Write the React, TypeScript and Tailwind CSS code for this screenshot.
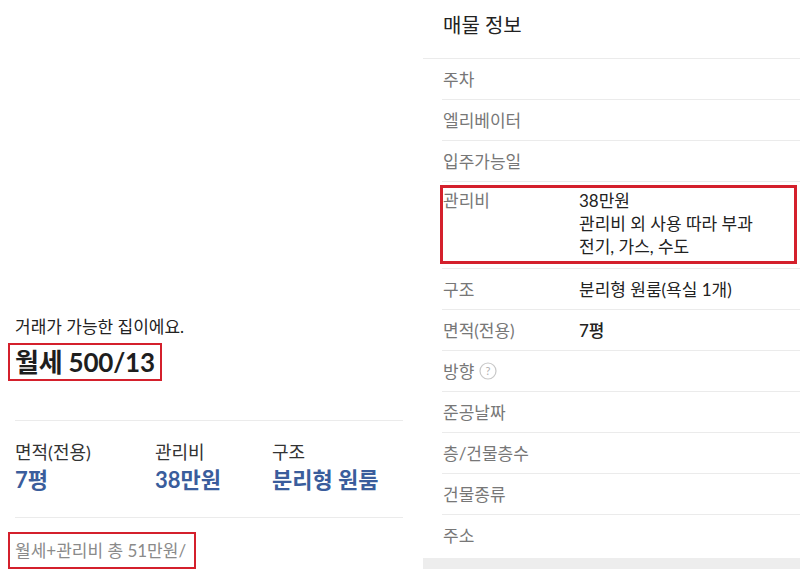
import React from 'react';

const font = "font-['Lato','Noto_Sans_CJK_KR',sans-serif]";

const rows: { label: string; value?: string[]; help?: boolean; strong?: boolean; mark?: boolean }[] = [
  { label: '주차' },
  { label: '엘리베이터' },
  { label: '입주가능일' },
  { label: '관리비', value: ['38만원', '관리비 외 사용 따라 부과', '전기, 가스, 수도'], mark: true },
  { label: '구조', value: ['분리형 원룸(욕실 1개)'] },
  { label: '면적(전용)', value: ['7평'], strong: true },
  { label: '방향', help: true },
  { label: '준공날짜' },
  { label: '층/건물층수' },
  { label: '건물종류' },
  { label: '주소' },
];

const stats = [
  { label: '면적(전용)', value: '7평', w: 'w-[140px]' },
  { label: '관리비', value: '38만원', w: 'w-[117px]' },
  { label: '구조', value: '분리형 원룸', w: 'flex-1' },
];

function HelpIcon() {
  return (
    <svg width="18" height="18" viewBox="0 0 18 18" className="ml-[5px]">
      <circle cx="9" cy="9" r="8" fill="none" stroke="#c8c8c8" strokeWidth="1.2" />
      <text x="9" y="13" textAnchor="middle" fontSize="11" fill="#b0b0b0" fontFamily="Lato, sans-serif">?</text>
    </svg>
  );
}

export default function App() {
  return (
    <div className={`w-[800px] h-[583px] bg-white flex overflow-hidden ${font}`}>
      {/* left: price summary */}
      <div className="w-[405px] pt-[316px] pl-[15px] flex flex-col">
        <p className="text-[17px] leading-[22px] text-[#222]">거래가 가능한 집이에요.</p>
        <div className="mt-[5px] -ml-[7px] self-start border-2 border-[#d4202c] pl-[5px] pr-[5px]">
          <span className="text-[26px] leading-[34px] font-bold text-[#1e1e1e] tracking-[-0.2px]">월세 500/13</span>
        </div>
        <div className="mt-[39px] w-[388px] border-t border-[#ebebeb]" />
        <div className="mt-[19px] flex w-[388px]">
          {stats.map((s) => (
            <div key={s.label} className={s.w}>
              <div className="text-[18px] leading-[25px] text-[#333]">{s.label}</div>
              <div className="mt-[1px] text-[22px] leading-[28px] font-bold text-[#3a5d9c]">{s.value}</div>
            </div>
          ))}
        </div>
        <div className="mt-[23px] w-[388px] border-t border-[#ebebeb]" />
        <div className="mt-[14px] -ml-[7px] self-start border-2 border-[#d4202c] pl-[5px] pr-[8px] whitespace-nowrap">
          <span className="text-[17px] leading-[33px] text-[#8a8a8a]">월세+관리비 총 51만원/</span>
        </div>
      </div>

      {/* right: listing info */}
      <div className="ml-[18px] flex-1 flex flex-col">
        <div className="h-[59px] border-b border-[#ebebeb] pl-[20px] pt-[11px]">
          <h2 className="text-[20px] leading-[28px] text-[#222]">매물 정보</h2>
        </div>
        <div className="ml-[19px]">
          {rows.map((r, i) => (
            <div
              key={r.label}
              className={`relative flex pl-[1px] ${r.value && r.value.length > 1 ? 'pt-[7px] pb-[10px] items-start' : 'h-[41px] items-center'} ${i < rows.length - 1 ? 'border-b border-[#ebebeb]' : ''}`}
            >
              <div className="w-[136px] flex items-center text-[17px] leading-[23px] text-[#777]">
                {r.label}
                {r.help && <HelpIcon />}
              </div>
              {r.value && (
                <div className={`text-[17px] leading-[23px] text-[#222] ${r.strong ? 'font-medium' : ''}`}>
                  {r.value.map((v) => (
                    <div key={v}>{v}</div>
                  ))}
                </div>
              )}
              {r.mark && (
                <div className="absolute left-[-2px] right-[3px] top-[3px] bottom-[4px] border-[3px] border-[#d4202c]" />
              )}
            </div>
          ))}
        </div>
        <div className="mt-[2px] h-[11px] bg-[#ededed]" />
      </div>
    </div>
  );
}
